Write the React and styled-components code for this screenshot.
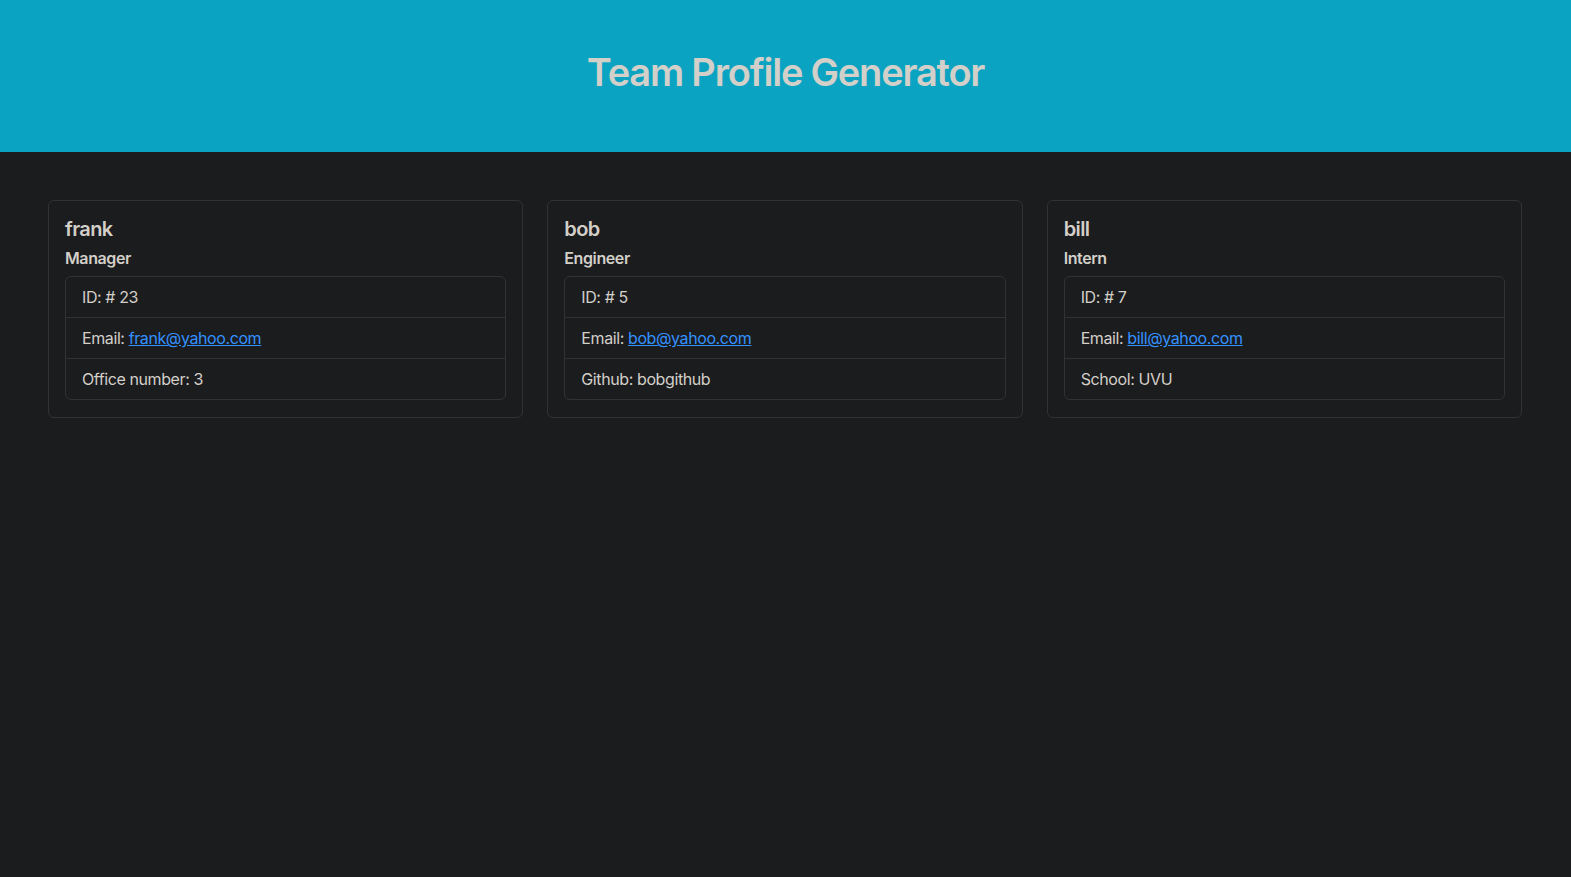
import React from 'react';
import styled, { createGlobalStyle } from 'styled-components';

const team = [
  { name: 'frank', role: 'Manager', id: 23, email: 'frank@yahoo.com', extra: 'Office number: 3' },
  { name: 'bob', role: 'Engineer', id: 5, email: 'bob@yahoo.com', extra: 'Github: bobgithub' },
  { name: 'bill', role: 'Intern', id: 7, email: 'bill@yahoo.com', extra: 'School: UVU' },
];

const App = () => {
  return (
    <>
      <GlobalStyle />
      <Header>
        <h1>Team Profile Generator</h1>
      </Header>
      <Cards>
        {team.map((member) => (
          <Card key={member.name}>
            <h5>{member.name}</h5>
            <h6>{member.role}</h6>
            <ListGroup>
              <li>ID: # {member.id}</li>
              <li>
                Email: <a href={`mailto:${member.email}`}>{member.email}</a>
              </li>
              <li>{member.extra}</li>
            </ListGroup>
          </Card>
        ))}
      </Cards>
    </>
  );
};

export default App;

const GlobalStyle = createGlobalStyle`
  html, body {
    margin: 0;
    min-height: 100%;
    background: #1b1c1e;
  }

  body {
    min-height: 877px;
    color: #d3cfc9;
    font-family: Inter, 'Noto Sans', sans-serif;
    font-size: 16px;
    line-height: 1.5;
    letter-spacing: -0.4px;
  }
`;

const Header = styled.header`
  height: 152px;
  background: #0ba3c2;
  display: flex;
  justify-content: center;
  padding-top: 50px;
  box-sizing: border-box;

  h1 {
    margin: 0;
    font-size: 38px;
    font-weight: 600;
    line-height: 1.2;
    letter-spacing: -1.2px;
    color: #d3cfc9;
  }
`;

const Cards = styled.main`
  display: grid;
  grid-template-columns: repeat(3, 1fr);
  gap: 24px;
  padding: 48px 49px 48px 48px;
`;

const Card = styled.section`
  border: 1px solid #303234;
  border-radius: 6px;
  padding: 16px 16px 17px;
  background: #1b1c1e;

  h5 {
    margin: 0 0 8px;
    font-size: 20px;
    font-weight: 600;
    line-height: 1.2;
    letter-spacing: -0.6px;
  }

  h6 {
    margin: 0 0 8px;
    font-size: 16px;
    font-weight: 600;
    line-height: 1.2;
  }
`;

const ListGroup = styled.ul`
  list-style: none;
  margin: 0;
  padding: 0;
  border: 1px solid #303234;
  border-radius: 6px;

  li {
    padding: 8px 16px;
    line-height: 24px;
    border-top: 1px solid #303234;
  }

  li:first-child {
    border-top: none;
  }

  a {
    color: #3391ff;
    text-decoration: underline;
  }
`;
